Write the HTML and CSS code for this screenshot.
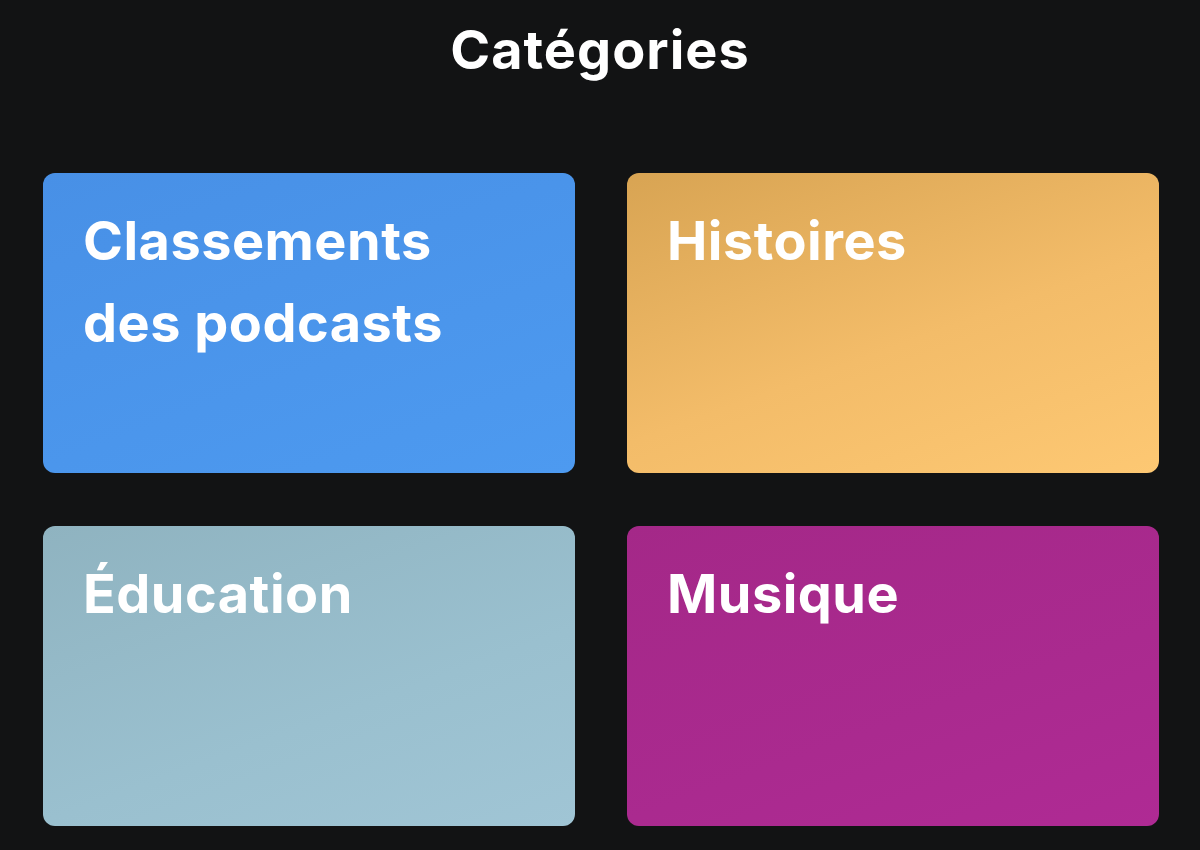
FILE: index.html
```html
<!DOCTYPE html>
<html lang="fr">
<head>
    <meta charset="UTF-8">
    <meta name="viewport" content="width=device-width, initial-scale=1.0">
    <title>Catégories</title>
    <link rel="stylesheet" href="styles.css">
</head>
<body>
    <header>
        <h1>Catégories</h1>
    </header>
    <div class="grid">
        <div class="card charts">
            <h2>Classements des podcasts</h2>
        </div>
        <div class="card stories">
            <h2>Histoires</h2>
        </div>
        <div class="card education">
            <h2>Éducation</h2>
        </div>
        <div class="card music">
            <h2>Musique</h2>
        </div>
    </div>
</body>
</html>
```

FILE: styles.css
```css
body {
    font-family: Inter, Lato, "Noto Sans", sans-serif;
    margin: 0;
    padding: 0;
    background-color: #121314;
    color: #fff;
    height: 850px;
    overflow: hidden;
}
header {
    text-align: center;
    padding-top: 14px;
}
header h1 {
    margin: 0;
    font-size: 54px;
    font-weight: 700;
    line-height: 72px;
    letter-spacing: 1px;
}
.grid {
    display: grid;
    grid-template-columns: 532px 532px;
    grid-auto-rows: 300px;
    column-gap: 52px;
    row-gap: 53px;
    padding: 87px 0 0 43px;
}
.card {
    border-radius: 12px;
    padding: 27px 40px;
    box-sizing: border-box;
}
.card h2 {
    margin: 0;
    font-size: 54px;
    font-weight: 700;
    line-height: 82px;
    letter-spacing: 0.5px;
    max-width: 420px;
}
.charts {
    background: linear-gradient(160deg, #4890e6 0%, #4d9af0 100%);
}
.stories {
    background: linear-gradient(160deg, #d8a453 0%, #f3bc69 55%, #fdc873 100%);
}
.education {
    background: linear-gradient(160deg, #8fb3c0 0%, #9ac0cf 60%, #a0c5d5 100%);
}
.music {
    background: linear-gradient(160deg, #a42888 0%, #aa2a8f 60%, #af2a94 100%);
}
```
